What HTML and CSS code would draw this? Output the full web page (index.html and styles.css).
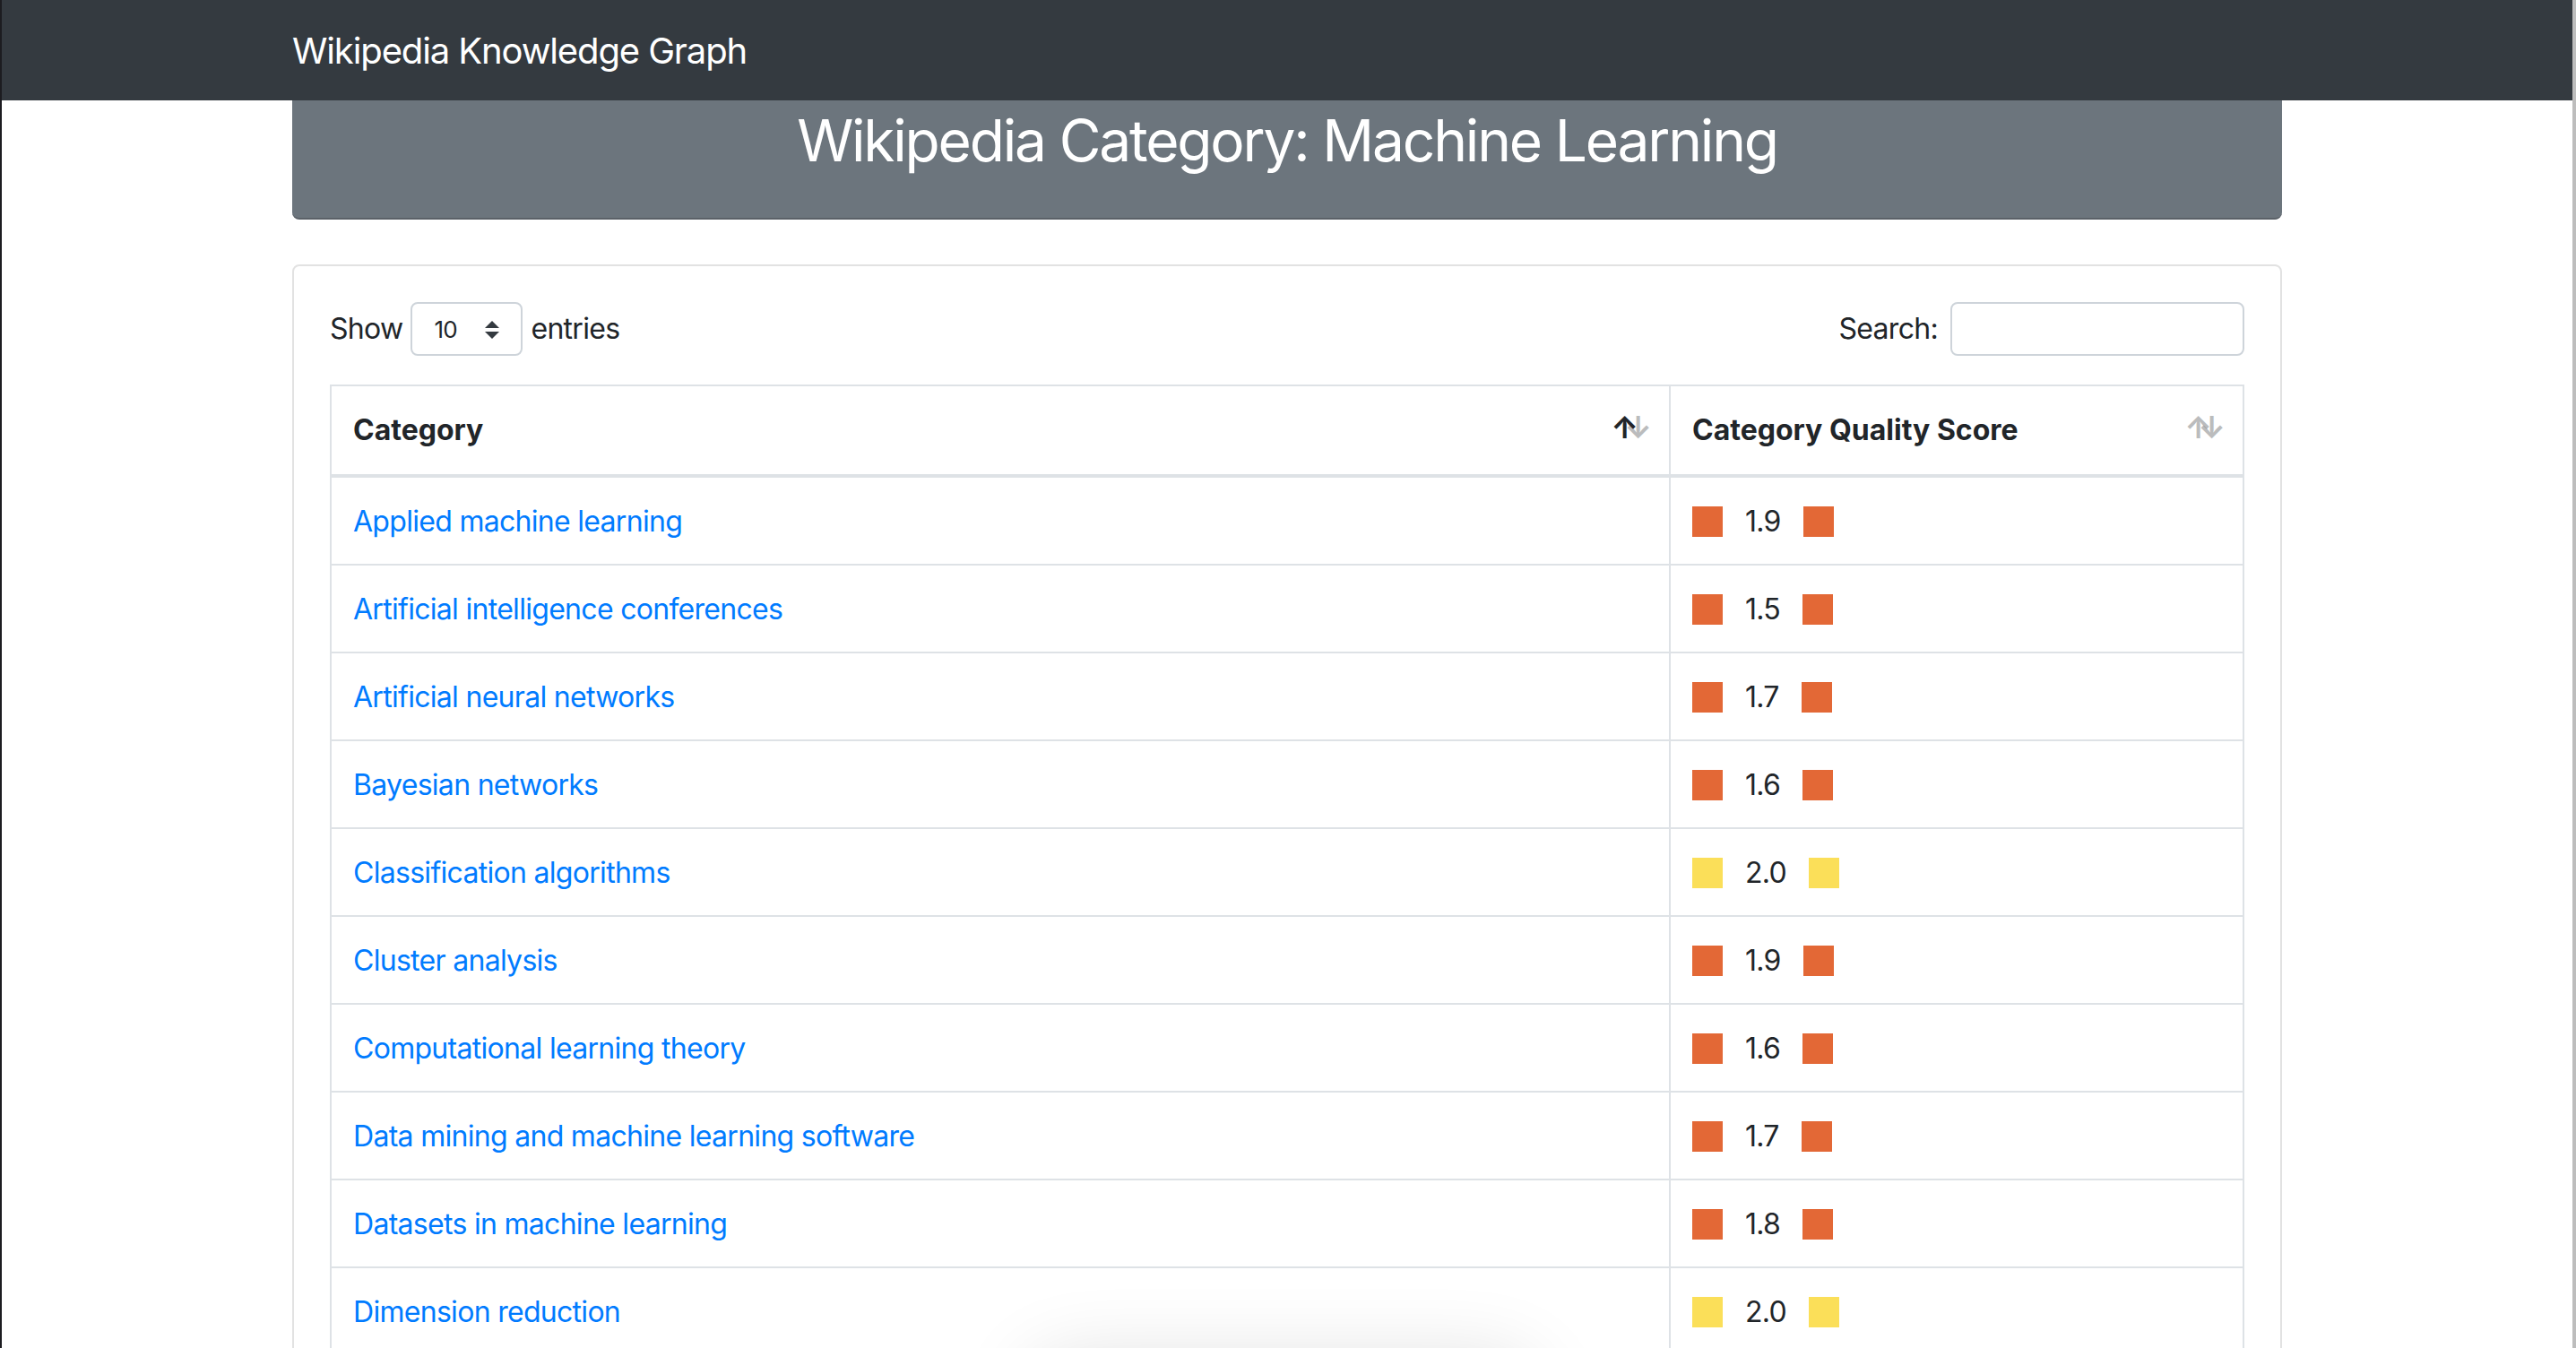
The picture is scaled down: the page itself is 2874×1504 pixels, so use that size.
FILE: index.html
```html
<!DOCTYPE html>
<html lang="en">
<head>
<meta charset="utf-8">
<title>Wikipedia Category: Machine Learning</title>
<link rel="stylesheet" href="styles.css">
</head>
<body>
<nav class="navbar">
  <div class="container">
    <a class="brand" href="#">Wikipedia Knowledge Graph</a>
  </div>
</nav>
<main class="container">
  <header class="hero">
    <h1>Wikipedia Category: Machine Learning</h1>
  </header>
  <section class="card">
    <div class="controls">
      <label class="length">Show
        <span class="select">10
          <svg class="caret" width="16" height="20" viewBox="0 0 4 5"><path d="M2 0L0 2h4zm0 5L0 3h4z" fill="#343a40"/></svg>
        </span>
        entries</label>
      <label class="search">Search: <input type="search" class="search-input"></label>
    </div>
    <table class="table">
      <thead>
        <tr>
          <th class="sorting asc col-cat">Category</th>
          <th class="sorting">Category Quality Score</th>
        </tr>
      </thead>
      <tbody>
        <tr><td><a href="#">Applied machine learning</a></td><td><div class="score"><span class="sq orange"></span><span>1.9</span><span class="sq orange"></span></div></td></tr>
        <tr><td><a href="#">Artificial intelligence conferences</a></td><td><div class="score"><span class="sq orange"></span><span>1.5</span><span class="sq orange"></span></div></td></tr>
        <tr><td><a href="#">Artificial neural networks</a></td><td><div class="score"><span class="sq orange"></span><span>1.7</span><span class="sq orange"></span></div></td></tr>
        <tr><td><a href="#">Bayesian networks</a></td><td><div class="score"><span class="sq orange"></span><span>1.6</span><span class="sq orange"></span></div></td></tr>
        <tr><td><a href="#">Classification algorithms</a></td><td><div class="score"><span class="sq yellow"></span><span>2.0</span><span class="sq yellow"></span></div></td></tr>
        <tr><td><a href="#">Cluster analysis</a></td><td><div class="score"><span class="sq orange"></span><span>1.9</span><span class="sq orange"></span></div></td></tr>
        <tr><td><a href="#">Computational learning theory</a></td><td><div class="score"><span class="sq orange"></span><span>1.6</span><span class="sq orange"></span></div></td></tr>
        <tr><td><a href="#">Data mining and machine learning software</a></td><td><div class="score"><span class="sq orange"></span><span>1.7</span><span class="sq orange"></span></div></td></tr>
        <tr><td><a href="#">Datasets in machine learning</a></td><td><div class="score"><span class="sq orange"></span><span>1.8</span><span class="sq orange"></span></div></td></tr>
        <tr><td><a href="#">Dimension reduction</a></td><td><div class="score"><span class="sq yellow"></span><span>2.0</span><span class="sq yellow"></span></div></td></tr>
      </tbody>
    </table>
  </section>
</main>
<div class="float-shadow"></div>
</body>
</html>
```

FILE: styles.css
```css
html, body {
  height: 100%;
  overflow: hidden;
}
body {
  margin: 0;
  background: #ffffff;
  border-left: 2px solid #1c1c20;
  border-right: 4px solid #bdbdbd;
  font-family: Inter, "Noto Sans", "Liberation Sans", sans-serif;
  font-size: 32px;
  line-height: 1.5;
  letter-spacing: -0.022em;
  color: #212529;
}
.container {
  width: 2280px;
  margin: 0 auto;
  padding: 0 30px;
  box-sizing: border-box;
}
.navbar {
  background: #343a40;
  height: 112px;
  display: flex;
  align-items: center;
}
.brand {
  display: block;
  color: #ffffff;
  text-decoration: none;
  font-size: 40px;
  line-height: 60px;
  padding-top: 2px;
  letter-spacing: -0.028em;
}
.hero {
  background: #6c757d;
  border-bottom: 2px solid #5b6168;
  border-radius: 0 0 8px 8px;
  height: 131px;
  text-align: center;
}
.hero h1 {
  margin: 0;
  color: #ffffff;
  font-weight: 400;
  font-size: 64px;
  line-height: 90px;
  letter-spacing: -0.034em;
}
.card {
  margin-top: 50px;
  border: 2px solid #e2e2e2;
  border-radius: 8px;
  padding: 40px 40px 0;
}
.controls {
  display: flex;
  justify-content: space-between;
  align-items: center;
  height: 60px;
}
.length, .search {
  display: flex;
  align-items: center;
  gap: 9px;
}
.select {
  box-sizing: border-box;
  width: 125px;
  height: 60px;
  border: 2px solid #ced4da;
  border-radius: 8px;
  font-size: 26px;
  padding-left: 24px;
  display: flex;
  align-items: center;
  position: relative;
}
.caret {
  position: absolute;
  right: 24px;
  top: 19px;
}
.search {
  gap: 14px;
}
.search-input {
  box-sizing: border-box;
  width: 328px;
  height: 60px;
  border: 2px solid #ced4da;
  border-radius: 8px;
  font-size: 28px;
  padding: 0 16px;
  margin: 0;
}
.table {
  margin-top: 32px;
  width: 100%;
  border-collapse: collapse;
  border: 2px solid #dee2e6;
}
.table th, .table td {
  border: 2px solid #dee2e6;
  padding: 24px;
  text-align: left;
  vertical-align: top;
}
.table td {
  padding-top: 25px;
  padding-bottom: 23px;
}
.table th {
  border-bottom-width: 4px;
  font-weight: 700;
  letter-spacing: 0;
  position: relative;
  padding-top: 25px;
  padding-bottom: 25px;
  padding-right: 60px;
}
.col-cat {
  width: 1408px;
}
.sorting::before, .sorting::after {
  position: absolute;
  bottom: 35px;
  display: block;
  opacity: 0.3;
  line-height: 1;
  font-size: 34px;
  font-weight: 700;
}
.sorting::before {
  right: 34px;
  content: "\2191";
}
.sorting::after {
  right: 19px;
  content: "\2193";
}
.asc::before {
  opacity: 1;
}
.table a {
  color: #007bff;
  text-decoration: none;
}
.score {
  display: flex;
  align-items: center;
  gap: 25px;
  height: 48px;
}
.sq {
  width: 34px;
  height: 34px;
  display: block;
}
.orange {
  background: #e36836;
}
.yellow {
  background: #fbdf59;
}
.float-shadow {
  position: fixed;
  left: 1150px;
  width: 560px;
  top: 1540px;
  height: 100px;
  border-radius: 40px;
  box-shadow: 0 -20px 90px rgba(0, 0, 0, 0.14);
}
```
